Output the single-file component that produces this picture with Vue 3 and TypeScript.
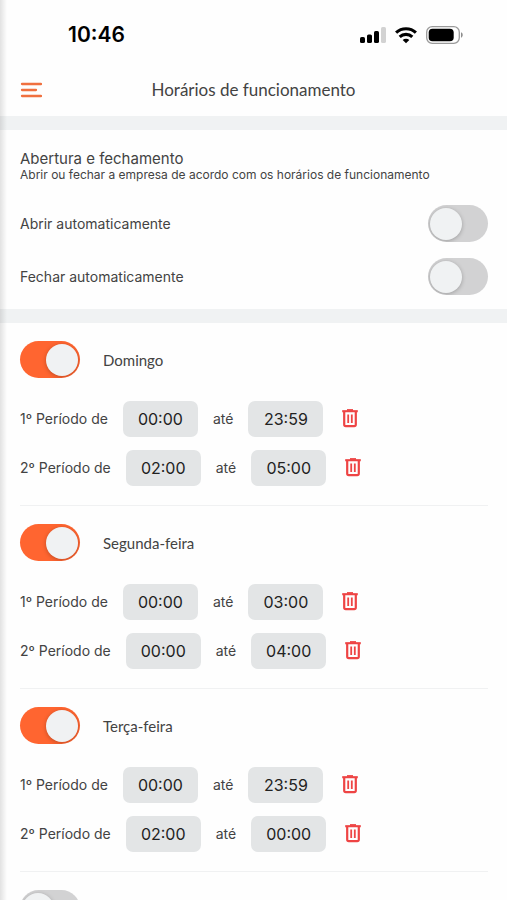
<script setup lang="ts">
import { reactive } from 'vue'

interface Period {
  from: string
  to: string
}

interface Day {
  id: string
  name: string
  open: boolean
  periods: Period[]
}

const auto = reactive({ open: false, close: false })

const days = reactive<Day[]>([
  {
    id: 'dom',
    name: 'Domingo',
    open: true,
    periods: [
      { from: '00:00', to: '23:59' },
      { from: '02:00', to: '05:00' },
    ],
  },
  {
    id: 'seg',
    name: 'Segunda-feira',
    open: true,
    periods: [
      { from: '00:00', to: '03:00' },
      { from: '00:00', to: '04:00' },
    ],
  },
  {
    id: 'ter',
    name: 'Terça-feira',
    open: true,
    periods: [
      { from: '00:00', to: '23:59' },
      { from: '02:00', to: '00:00' },
    ],
  },
  { id: 'qua', name: 'Quarta-feira', open: false, periods: [] },
])

function removePeriod(day: Day, index: number): void {
  day.periods.splice(index, 1)
}
</script>

<template>
  <div class="screen">
    <div class="status">
      <span class="clock">10:46</span>
      <div class="indicators">
        <svg width="26" height="18" viewBox="0 0 26 18" aria-hidden="true">
          <rect x="0" y="11" width="5" height="6" rx="1.6" />
          <rect x="7" y="8.500" width="5" height="8.500" rx="1.600" />
          <rect x="14" y="5" width="5" height="12" rx="1.6" />
          <rect x="21" y="1" width="5" height="16" rx="1.6" fill="#d2d2d2" />
        </svg>
        <svg width="22" height="18" viewBox="1 0 22 18" aria-hidden="true">
          <g fill="none" stroke="#000" stroke-width="3.1">
            <path d="M2.100 6.600A14.500 14.500 0 0 1 21.900 6.600" />
            <path d="M5.700 10.900A9.200 9.200 0 0 1 18.300 10.900" />
          </g>
          <path d="M12 17.300L8.700 14A4.700 4.700 0 0 1 15.300 14Z" />
        </svg>
        <svg width="38" height="18" viewBox="0 0 38 18" aria-hidden="true">
          <rect x="0.700" y="0.700" width="32.600" height="16.600" rx="5.500" fill="#fff" stroke="#9a9a9a" stroke-width="1.300" />
          <rect x="2.700" y="2.700" width="25" height="12.600" rx="3.800" />
          <path d="M35 6.300C37.300 7 37.300 11 35 11.700Z" fill="#8d8d8d" />
        </svg>
      </div>
    </div>

    <header class="header">
      <button class="menu" type="button" aria-label="Menu">
        <svg width="22" height="16" viewBox="0 0 22 16" aria-hidden="true">
          <path d="M2 2H21M2 8H16M2 14H21" fill="none" stroke="#f0703f" stroke-width="2.300" stroke-linecap="round" />
        </svg>
      </button>
      <h1 class="title">Horários de funcionamento</h1>
    </header>

    <main class="content">
      <section class="auto">
        <h2 class="auto-title">Abertura e fechamento</h2>
        <p class="auto-note">Abrir ou fechar a empresa de acordo com os horários de funcionamento</p>
        <div class="auto-row">
          <label for="auto-open">Abrir automaticamente</label>
          <input id="auto-open" v-model="auto.open" class="switch" type="checkbox" />
        </div>
        <div class="auto-row">
          <label for="auto-close">Fechar automaticamente</label>
          <input id="auto-close" v-model="auto.close" class="switch" type="checkbox" />
        </div>
      </section>

      <section class="days">
        <article v-for="day in days" :key="day.id" class="day">
          <div class="day-head">
            <input :id="day.id" v-model="day.open" class="switch" type="checkbox" />
            <label class="day-name" :for="day.id">{{ day.name }}</label>
          </div>
          <div v-if="day.periods.length" class="periods">
            <div v-for="(period, i) in day.periods" :key="i" class="period">
              <label :for="`${day.id}-${i}-from`">{{ i + 1 }}º Período de</label>
              <input :id="`${day.id}-${i}-from`" v-model="period.from" class="time" type="text" inputmode="numeric" />
              <label :for="`${day.id}-${i}-to`">até</label>
              <input :id="`${day.id}-${i}-to`" v-model="period.to" class="time" type="text" inputmode="numeric" />
              <button class="remove" type="button" aria-label="Remover período" @click="removePeriod(day, i)">
                <svg width="16" height="20" viewBox="0 0 16 20" aria-hidden="true">
                  <g fill="none" stroke="#ee4444">
                    <path d="M0.200 2.200H15.800" stroke-width="2.100" />
                    <path d="M5 1H11" stroke-width="1.800" />
                    <path d="M2.200 2.800V15.600Q2.200 17.200 3.800 17.200H12.200Q13.800 17.200 13.800 15.600V2.800" stroke-width="2.200" />
                    <path d="M6.200 5.600V14M9.800 5.600V14" stroke-width="1.800" />
                  </g>
                </svg>
              </button>
            </div>
          </div>
        </article>
      </section>
    </main>
    <div class="edge" aria-hidden="true"></div>
  </div>
</template>

<style>
body {
  margin: 0;
  background: #fefefe;
}
</style>

<style scoped>
.screen {
  position: relative;
  display: flex;
  flex-direction: column;
  height: 100vh;
  overflow: hidden;
  background: #fefefe;
  color: #434343;
  font-family: Inter, "Liberation Sans", sans-serif;
  font-size: 14px;
  line-height: 20px;
}

.edge {
  position: absolute;
  inset: 0 auto 0 0;
  width: 7px;
  background: linear-gradient(to right, rgba(0, 0, 0, 0.11), rgba(0, 0, 0, 0));
  pointer-events: none;
}

.status {
  display: flex;
  align-items: center;
  justify-content: space-between;
  height: 40px;
  padding: 15px 43px 9px 68px;
}

.clock {
  color: #000;
  font-size: 21px;
  font-weight: 600;
}

.indicators {
  display: flex;
  align-items: center;
  gap: 9px;
}

.header {
  display: grid;
  grid-template-columns: 24px 1fr 24px;
  align-items: center;
  height: 52px;
  padding: 0 20px;
}

.menu,
.remove {
  display: flex;
  padding: 0;
  border: 0;
  background: none;
  cursor: pointer;
}

.remove {
  margin-left: 4px;
}

.title,
.day-name {
  font-family: Lato, "Noto Sans", sans-serif;
}

.title {
  margin: 0;
  font-size: 17px;
  font-weight: 400;
  text-align: center;
}

.content {
  flex: 1;
  min-height: 0;
  overflow-y: auto;
  scrollbar-width: none;
}

.auto {
  padding: 20px 19px 14px 20px;
  border: solid #f0f2f3;
  border-width: 14px 0;
}

.auto-title {
  margin: 0;
  font-size: 15px;
  font-weight: 400;
  line-height: 18px;
}

.auto-note {
  margin: 0 0 23px;
  font-size: 12px;
  line-height: 14px;
}

.auto-row {
  display: flex;
  align-items: center;
  justify-content: space-between;
}

.auto-row + .auto-row {
  margin-top: 16px;
}

.switch {
  display: flex;
  flex: none;
  align-items: center;
  box-sizing: border-box;
  width: 60px;
  height: 37px;
  margin: 0;
  padding: 0 2px;
  border-radius: 19px;
  appearance: none;
  background: #d2d2d3;
  overflow: hidden;
  cursor: pointer;
}

.switch::before {
  content: "";
  width: 32px;
  height: 32px;
  border-radius: 50%;
  background: #f0f2f3;
  box-shadow: 0 1px 4px rgba(0, 0, 0, 0.25);
}

.switch:checked {
  justify-content: flex-end;
  background: #ff6530;
}

.day {
  margin: 0 19px 0 20px;
  padding: 18px 0 19px;
  border-bottom: 1px solid #f0f1f2;
}

.day-head {
  display: flex;
  align-items: center;
  gap: 23px;
}

.day-name {
  font-size: 15px;
}

.periods {
  display: grid;
  gap: 13px;
  margin-top: 23px;
}

.period {
  display: flex;
  align-items: center;
  gap: 15px;
}

.time {
  box-sizing: border-box;
  width: 75px;
  height: 36px;
  padding: 0;
  border: 0;
  border-radius: 7px;
  background: #e3e5e6;
  color: #222;
  font: inherit;
  font-size: 16px;
  text-align: center;
}
</style>
